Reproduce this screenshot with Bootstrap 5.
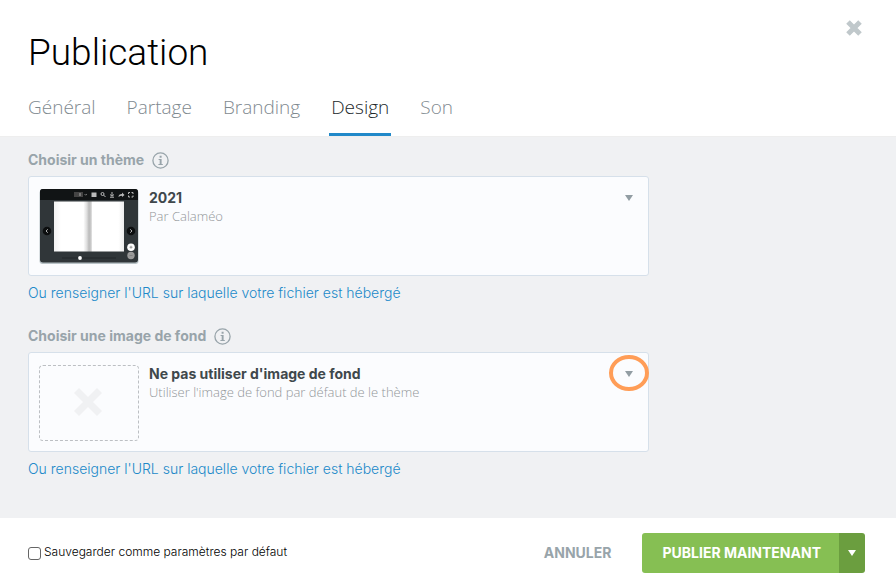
<!DOCTYPE html>
<html lang="fr">
<head>
<meta charset="utf-8">
<meta name="viewport" content="width=device-width, initial-scale=1">
<title>Publication</title>
<link href="https://cdn.jsdelivr.net/npm/bootstrap@5.3.0/dist/css/bootstrap.min.css" rel="stylesheet">
<style>
body { font-family: Inter, "Open Sans", sans-serif; font-weight: 300; font-size: 14px; line-height: 20px; color: #000; background: #fff; }
.page-head { padding: 29px 28px 0; }
.page-title { font-family: Roboto, "Open Sans", sans-serif; font-size: 37px; line-height: 48px; font-weight: 300; color: #000; }
.close-btn { padding: 0; line-height: 0; margin: -10px 5px 0 0; }
.tabs { gap: 27px; margin: 14px 0 0 -2px; font-family: "Open Sans", sans-serif; }
.tabs .nav-link { padding: 4px 2px 14px; font-size: 19px; line-height: 24px; font-weight: 300; color: #7f8a90; border-bottom: 3px solid transparent; }
.tabs .nav-link.active { color: #22282b; border-bottom-color: #2189c9; }
.page-main { background: #f0f1f3; padding: 13px 28px 4px; border-top: 1px solid #eee; }
.field-block { max-width: 621px; margin-bottom: 23px; }
.field-label { font-size: 14px; font-weight: 700; color: #98a4aa; gap: 8px; margin-bottom: 6px; }
.info-btn { padding: 0; line-height: 0; color: #98a4aa; }
.picker { min-height: 100px; padding: 12px 10px 10px; gap: 10px; background: #fbfcfe; border: 1px solid #d6e0ea; border-radius: 3px; color: #3f484c; font-weight: 300; }
.picker-name { font-size: 14px; line-height: 18px; font-weight: 700; color: #3f484c; }
.picker-note { font-family: "Open Sans", sans-serif; font-size: 13px; line-height: 18px; color: #929699; }
.thumb { flex: 0 0 100px; height: 76px; }
.thumb-empty { border: 1px dashed #bcbfc3; border-radius: 4px; }
.picker-caret { margin: 6px 5px 0 auto; }
.url-link { font-size: 14px; margin-top: 7px; color: #2189c9; text-decoration: none; }
.ring { width: 40px; height: 36px; top: 3px; right: 0; border: 4px solid #ff9d57; border-radius: 50%; pointer-events: none; }
.page-foot { padding: 15px 31px 14px 28px; }
.save-check { gap: 3px; font-size: 12px; }
.save-check input { width: 13px; height: 13px; margin: 0; border-radius: 2px; border-color: #666; }
.save-check label { padding-bottom: 3px; }
.cancel-btn { font-family: Inter, sans-serif; font-size: 14px; line-height: 20px; font-weight: 700; color: #98a4aa; padding: 8px 31px; }
.publish-btn, .publish-more { height: 40px; background: #86bf53; color: #fff; border: 0; border-radius: 3px; font-size: 14px; line-height: 20px; font-weight: 700; }
.publish-btn { padding: 0 19px 0 20px; }
.publish-more { background: #6b9e3f; padding: 0 9px; line-height: 0; }
</style>
<script src="https://cdn.jsdelivr.net/npm/bootstrap@5.3.0/dist/js/bootstrap.bundle.min.js"></script>
</head>
<body class="d-flex flex-column min-vh-100">
<header class="page-head">
  <div class="d-flex justify-content-between align-items-start">
    <h1 class="page-title mb-0">Publication</h1>
    <button type="button" class="btn border-0 close-btn" aria-label="Fermer">
      <svg width="18" height="18" viewBox="0 0 18 18"><path d="M3 3l12 12M15 3L3 15" fill="none" stroke="#c0c8cb" stroke-width="5"/></svg>
    </button>
  </div>
  <nav class="nav tabs" aria-label="Paramètres">
    <a class="nav-link" href="#">Général</a>
    <a class="nav-link" href="#">Partage</a>
    <a class="nav-link" href="#">Branding</a>
    <a class="nav-link active" aria-current="page" href="#">Design</a>
    <a class="nav-link" href="#">Son</a>
  </nav>
</header>

<main class="page-main flex-grow-1">
  <section class="field-block">
    <div class="field-label d-flex align-items-center">
      <label for="theme">Choisir un thème</label>
      <button type="button" class="btn border-0 info-btn" aria-label="Aide sur le thème">
        <svg width="17" height="17" viewBox="0 0 17 17"><circle cx="8.500" cy="8.500" r="7.600" fill="none" stroke="currentColor" stroke-width="1.300"/><path d="M7.600 3.800h2v2h-2zM6.600 7h3v5h1.200v1H6.400v-1h1.300V8H6.600z" fill="currentColor"/></svg>
      </button>
    </div>
    <button type="button" id="theme" class="picker w-100 d-flex align-items-start text-start">
      <svg class="thumb" width="100" height="76" viewBox="0 0 100 76">
        <defs><linearGradient id="fold"><stop offset="0" stop-color="#f2f2f2"/><stop offset=".1" stop-color="#fff"/><stop offset=".42" stop-color="#fff"/><stop offset=".47" stop-color="#ddd"/><stop offset=".5" stop-color="#bbb"/><stop offset=".53" stop-color="#ccc"/><stop offset=".55" stop-color="#fff"/><stop offset=".92" stop-color="#fff"/><stop offset="1" stop-color="#eee"/></linearGradient></defs>
        <rect x=".5" y="1" width="99" height="74" rx="3" fill="#b9c3c7"/>
        <rect x="1" y="0" width="98" height="73.500" rx="3" fill="#303639"/>
        <path d="M1 11V3a3 3 0 0 1 3-3h92a3 3 0 0 1 3 3v8z" fill="#111415"/>
        <rect x="15" y="12.500" width="70" height="50" fill="url(#fold)"/>
        <rect x="35" y="3" width="9" height="5" fill="#444"/><path d="M41 4v3" stroke="#aaa"/><path d="M45.500 5l1.200 1.200L48 5" fill="none" stroke="#777"/>
        <path d="M52.500 3.500h5v4.500h-5z" fill="#bbb"/><circle cx="63.500" cy="5" r="1.500" fill="none" stroke="#bbb"/><path d="M64.500 6l2 2M73 3v4M71 5.500l2 1.700 2-1.700M71 8.200h4" fill="none" stroke="#bbb"/><path d="M79.500 8q0-3 3.500-3V3.500L85.500 6 83 8V6.800q-2 0-3.500 1.200z" fill="#bbb"/><path d="M89.500 5V3.500H91M92.500 3.500H94V5M94 6.500V8h-1.500M91 8h-1.500V6.500" fill="none" stroke="#bbb"/>
        <circle cx="8" cy="42" r="4.300" fill="#0c0e0f"/><circle cx="92" cy="42" r="4.300" fill="#0c0e0f"/>
        <path d="M8.800 40.300L7 42l1.800 1.700M91.200 40.300L93 42l-1.800 1.700" fill="none" stroke="#ddd" stroke-width=".8"/>
        <path d="M23 69h54" stroke="#22272a"/><circle cx="41" cy="69" r="1.900" fill="#fff"/>
        <circle cx="92" cy="66.500" r="3.700" fill="#999"/><circle cx="92" cy="58.200" r="3.800" fill="#fff"/><path d="M90.500 58.200h3M92 56.700v3M90.500 66.500h3" stroke="#777" stroke-width=".7"/>
      </svg>
      <span>
        <span class="picker-name d-block">2021</span>
        <span class="picker-note d-block">Par Calaméo</span>
      </span>
      <svg class="picker-caret" width="8" height="6" viewBox="0 0 8 6"><path d="M0 0h8L4 6z" fill="#929da3"/></svg>
    </button>
    <a class="url-link d-inline-block" href="#">Ou renseigner l'URL sur laquelle votre fichier est hébergé</a>
  </section>

  <section class="field-block">
    <div class="field-label d-flex align-items-center">
      <label for="background">Choisir une image de fond</label>
      <button type="button" class="btn border-0 info-btn" aria-label="Aide sur l'image de fond">
        <svg width="17" height="17" viewBox="0 0 17 17"><circle cx="8.500" cy="8.500" r="7.600" fill="none" stroke="currentColor" stroke-width="1.300"/><path d="M7.600 3.800h2v2h-2zM6.600 7h3v5h1.200v1H6.400v-1h1.300V8H6.600z" fill="currentColor"/></svg>
      </button>
    </div>
    <div class="position-relative">
      <button type="button" id="background" class="picker w-100 d-flex align-items-start text-start">
        <span class="thumb thumb-empty d-flex align-items-center justify-content-center">
          <svg width="32" height="30" viewBox="0 0 32 30"><path d="M3.500 2.500l23 23M26.500 2.500l-23 23" fill="none" stroke="#f0f1f3" stroke-width="7"/></svg>
        </span>
        <span>
          <span class="picker-name d-block">Ne pas utiliser d'image de fond</span>
          <span class="picker-note d-block">Utiliser l'image de fond par défaut de le thème</span>
        </span>
        <svg class="picker-caret" width="8" height="6" viewBox="0 0 8 6"><path d="M0 0h8L4 6z" fill="#929da3"/></svg>
      </button>
      <span class="ring position-absolute"></span>
    </div>
    <a class="url-link d-inline-block" href="#">Ou renseigner l'URL sur laquelle votre fichier est hébergé</a>
  </section>
</main>

<footer class="page-foot d-flex flex-wrap align-items-center justify-content-between">
  <div class="save-check d-flex align-items-center">
    <input class="form-check-input" type="checkbox" id="save-default">
    <label for="save-default">Sauvegarder comme paramètres par défaut</label>
  </div>
  <div class="d-flex align-items-center">
    <button type="button" class="btn border-0 cancel-btn">ANNULER</button>
    <div class="btn-group">
      <button type="button" class="btn publish-btn">PUBLIER MAINTENANT</button>
      <button type="button" class="btn publish-more" aria-label="Plus d'options">
        <svg width="8" height="6" viewBox="0 0 8 6"><path d="M0 0h8L4 6z" fill="#fff"/></svg>
      </button>
    </div>
  </div>
</footer>
</body>
</html>
